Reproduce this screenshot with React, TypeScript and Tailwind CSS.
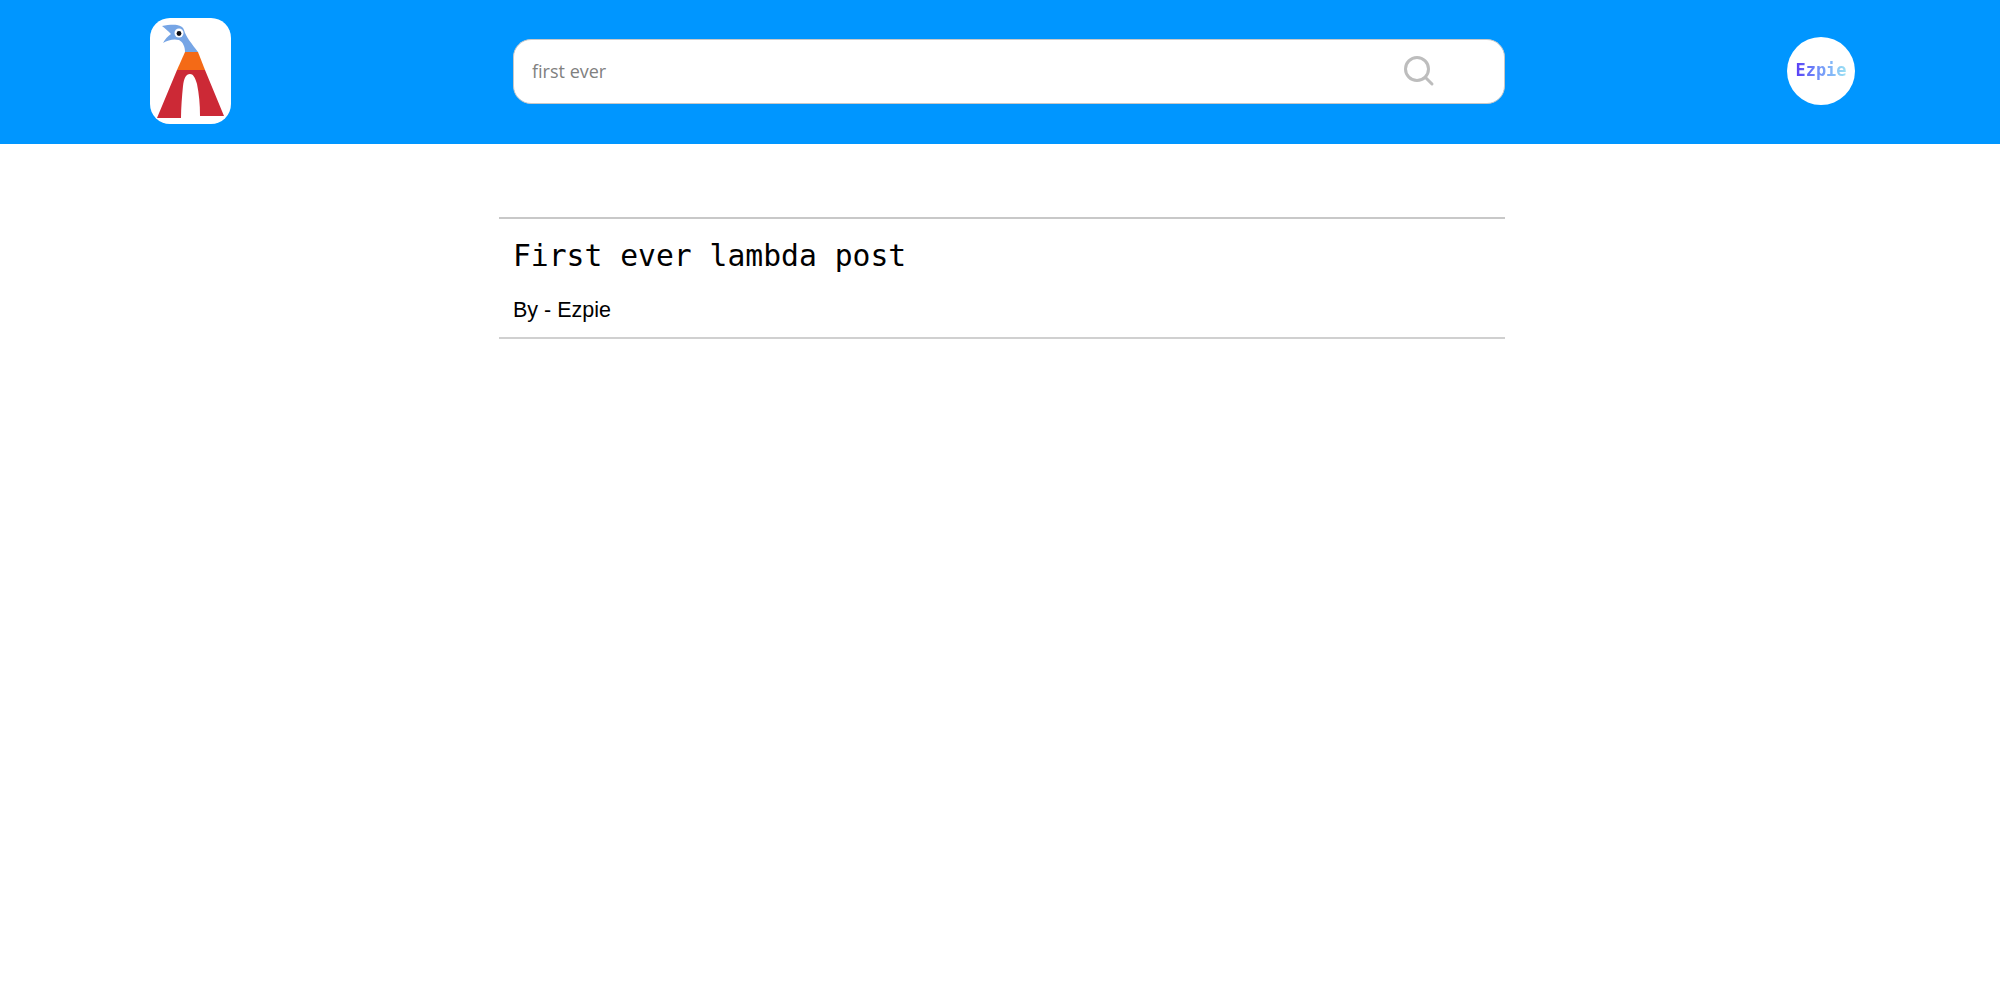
import React from 'react';

function Logo() {
  return (
    <div className="w-[81px] h-[106px] rounded-[20px] bg-white shrink-0 -mt-[2px]">
      <svg width="81" height="106" viewBox="0 0 81 106">
        <path d="M12 8 C17 7 23 6.5 27 7 C31 8 33 9 34 12 C36 19 42 26 48 34 L35 34 C35 29 33 24 29 22 C24 20.5 18 22 13 25 C15 21 18 18 21 16 C18 13 15 10 12 8 Z" fill="#76a5e5" />
        <circle cx="29" cy="15" r="4.5" fill="#ffffff" />
        <circle cx="29" cy="15.5" r="2.4" fill="#0b0b12" />
        <path d="M35 34 L48 34 L55 52 L27 52 Z" fill="#f46a16" />
        <path d="M27 52 L55 52 L74 98 L50 98 C50 86 49 76 47 66 C45 59 43 56 40 56 C36 56 34 60 33 68 C32 78 31 90 31 100 L7 100 Z" fill="#cc2936" />
      </svg>
    </div>
  );
}

function SearchBar() {
  return (
    <div className="w-[992px] h-[65px] ml-[282px] rounded-[18px] bg-white border border-[#c8c8c8] flex items-center pl-[18px] pr-[69px] -mt-[2px]">
      <input
        readOnly
        value="first ever"
        className="flex-1 outline-none bg-transparent text-[18px] text-[#808080] font-['Open_Sans',sans-serif]"
      />
      <svg width="32" height="32" viewBox="0 0 32 32" fill="none" stroke="#bdbdbd" strokeWidth="3" strokeLinecap="round">
        <circle cx="14" cy="14" r="11.5" />
        <path d="M23 23 L29 29" />
      </svg>
    </div>
  );
}

export default function App() {
  return (
    <div className="min-h-[983px] bg-white">
      <header className="h-[144px] bg-[#0096ff] flex items-center pl-[150px]">
        <Logo />
        <SearchBar />
        <div className="w-[68px] h-[68px] ml-[282px] rounded-full bg-white flex items-center justify-center -mt-[2px]">
          <span className="text-[17px] font-bold font-['DejaVu_Sans_Mono',monospace] bg-gradient-to-r from-[#5a35f5] to-[#9ce3f3] bg-clip-text text-transparent">
            Ezpie
          </span>
        </div>
      </header>

      <main className="w-[1006px] ml-[499px] mt-[73px]">
        <article className="border-y-2 border-t-[#c8c8c8] border-b-[#d0d0d0] px-[14px] pt-[15px] pb-[12px]">
          <h2 className="text-[29.7px] leading-[44px] text-black font-['DejaVu_Sans_Mono',monospace]">First ever lambda post</h2>
          <p className="mt-[17px] text-[21.5px] leading-[30px] text-black font-['Liberation_Sans',sans-serif]">By - Ezpie</p>
        </article>
      </main>
    </div>
  );
}
